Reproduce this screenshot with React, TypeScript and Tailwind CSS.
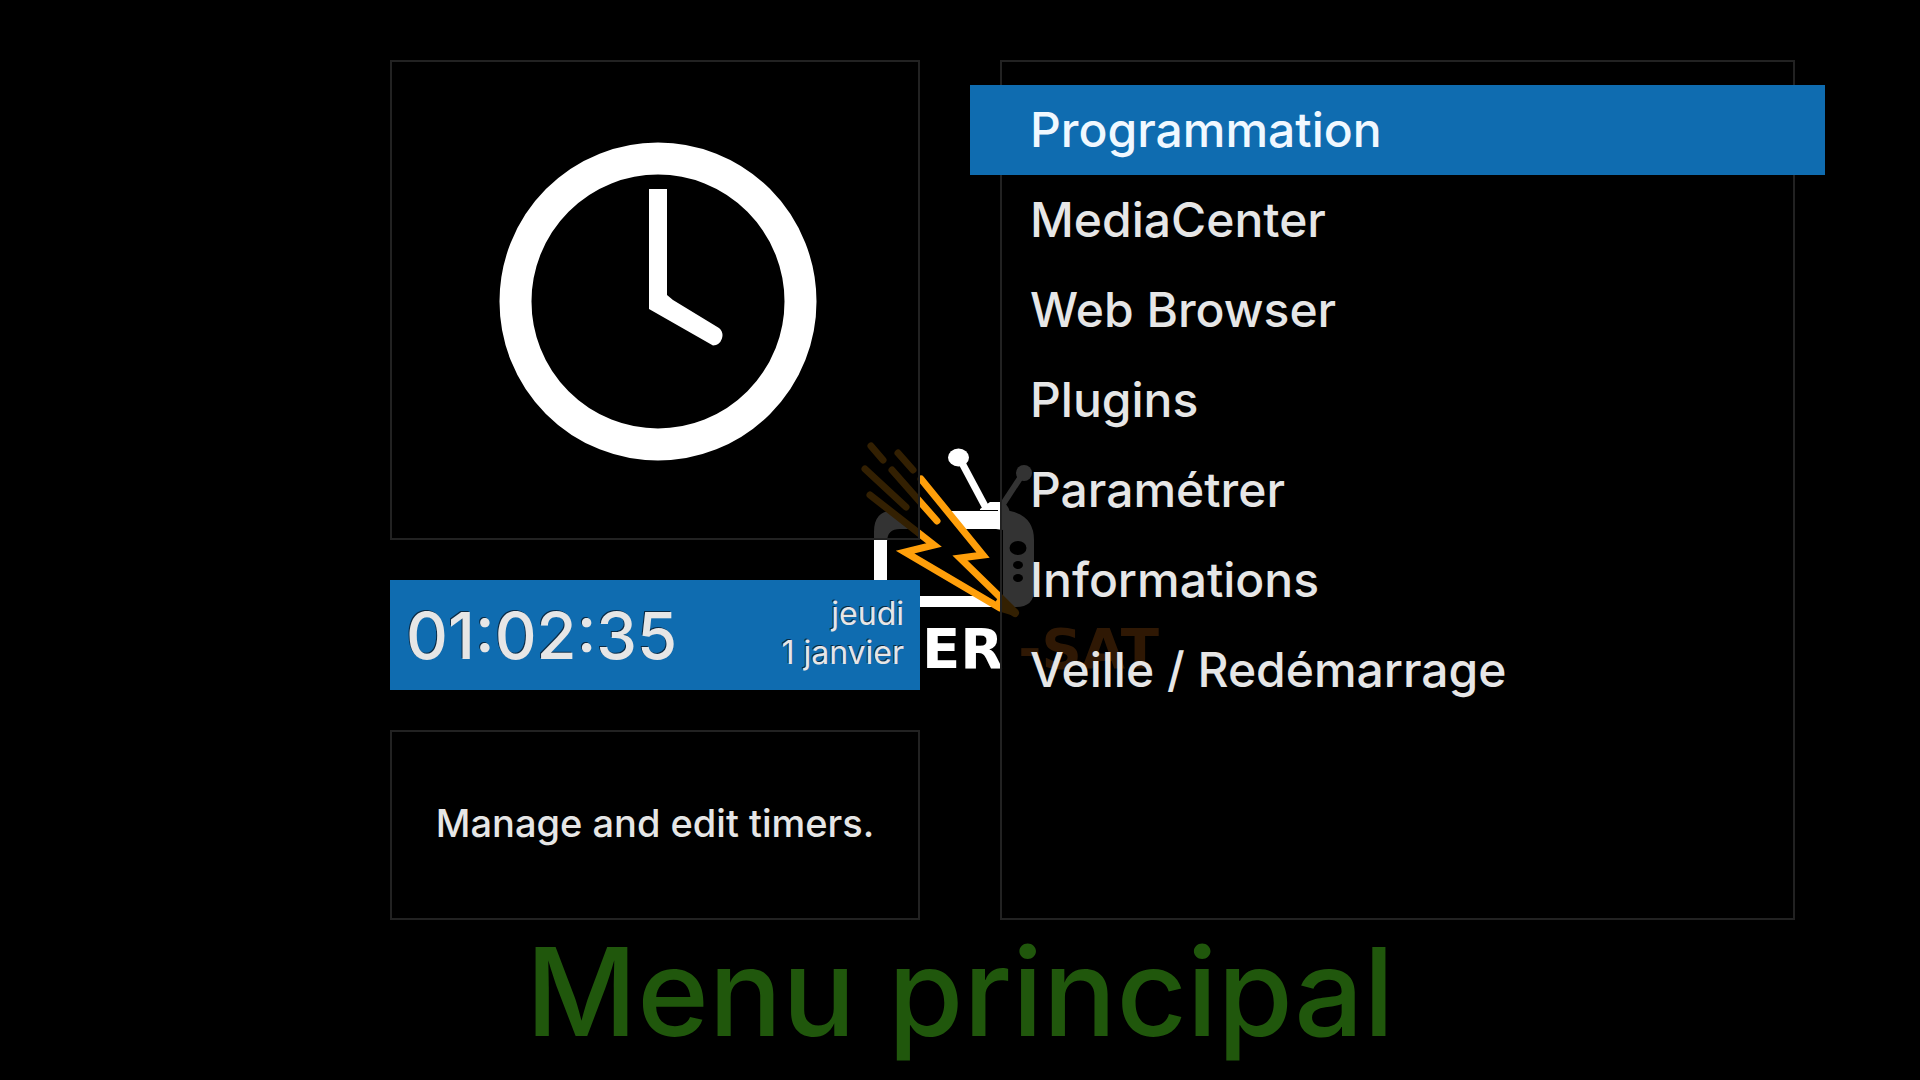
const MENU = [
  { label: "Programmation", selected: true },
  { label: "MediaCenter", selected: false },
  { label: "Web Browser", selected: false },
  { label: "Plugins", selected: false },
  { label: "Paramétrer", selected: false },
  { label: "Informations", selected: false },
  { label: "Veille / Redémarrage", selected: false },
]

// Boot logo, sits behind the translucent panels
function Logo() {
  return (
    <svg viewBox="760 410 400 260" className="w-[400px] h-[260px] shrink-0" role="img" aria-label="Power-Sat">
      {/* antennas */}
      <g stroke="#fff" fill="#fff">
        <ellipse cx="958.5" cy="457.5" rx="10.5" ry="9" stroke="none" />
        <path d="M962 463 986 508" strokeWidth="7" />
        <circle cx="1024" cy="473" r="8" stroke="none" />
        <path d="M1022 475 1003 504" strokeWidth="6" />
      </g>
      <path d="M980 509 990 502H1003Q1009 506 1010 513H998V510H980Z" fill="#fff" />

      {/* tv set */}
      <path
        fill="#fff"
        fillRule="evenodd"
        d="M892 511H1010Q1034 516 1034 540V590Q1034 607 1016 607H892Q874 607 874 590V532Q874 511 892 511ZM900 529Q887 529 887 542V596H1003V530L996 529Z"
      />
      <g fill="#000">
        <ellipse cx="1018" cy="548" rx="8.5" ry="7" />
        <ellipse cx="1018" cy="565" rx="5" ry="4" />
        <ellipse cx="1018" cy="578" rx="5" ry="4" />
      </g>

      {/* lightning bolt */}
      <path d="M921 479 985 555 958 558 1016 613 903 552 935 545 870 495Z" fill="#000" />
      <g stroke="#ff9f0a" strokeWidth="7" fill="none" strokeLinecap="round">
        <path d="M921 479 983 555 960 558 1001 598 1016 613 1000 608 905 552 934 545 870 495" />
        <path d="M871 446 883 460" />
        <path d="M898 453 913 470" />
        <path d="M892 470 937 521" />
        <path d="M865 469 906 507" />
        <path d="M1000 602 1015 613" strokeWidth="8" />
      </g>

      <g fontSize="56" className="font-['DejaVu_Sans',sans-serif] font-bold">
        <text x="922" y="668" fill="#fff">
          ER
        </text>
        <text x="1159" y="668" textAnchor="end" fill="#e87818">
          -SAT
        </text>
      </g>
    </svg>
  )
}

function ClockIcon() {
  return (
    <svg viewBox="392 62 526 476" className="w-full h-full" aria-hidden="true">
      <ellipse cx="658" cy="301.5" rx="142.5" ry="143" fill="none" stroke="#fff" strokeWidth="32" />
      <path
        d="M649 189H667V295L673 300 719 328A10 10 0 0 1 713 345.500L649 309Z"
        fill="#fff"
      />
    </svg>
  )
}

export default function App() {
  return (
    <div className="relative min-h-screen bg-black text-[#e6e6e6] font-[Inter,sans-serif] overflow-hidden">
      <div className="absolute inset-0 flex items-center justify-center">
        <Logo />
      </div>

      <main className="relative pt-[60px] pl-[390px] pr-[125px] grid grid-cols-[2fr_3fr] gap-20">
        <div className="flex flex-col gap-10 min-w-0">
          <div className="h-[480px] border-2 border-[#222] bg-black/80">
            <ClockIcon />
          </div>

          <div
            className="h-[110px] px-4 flex items-center justify-between bg-[#0f6cb0]"
            style={{ textShadow: "-1px -1px 0 #0a2a44" }}
          >
            <time className="text-[65px] leading-none font-medium">01:02:35</time>
            <div className="pb-1 text-right text-[32px] leading-[39px]">
              <div>jeudi</div>
              <div>1 janvier</div>
            </div>
          </div>

          <div className="flex-1 min-h-[190px] pb-1 border-2 border-[#222] bg-black/80 flex items-center justify-center text-center">
            <p className="text-[38px] leading-none font-medium">Manage and edit timers.</p>
          </div>
        </div>

        <nav className="pt-[23px] border-2 border-[#222] bg-black/80">
          <ul>
            {MENU.map((item) => (
              <li key={item.label} className={item.selected ? "-mx-8" : ""}>
                <button
                  type="button"
                  className={
                    item.selected
                      ? "block w-full h-[90px] px-[60px] text-left text-5xl font-medium bg-[#0f6cb0] text-[#f0f8ff]"
                      : "block w-full h-[90px] px-7 text-left text-5xl font-medium"
                  }
                >
                  {item.label}
                </button>
              </li>
            ))}
          </ul>
        </nav>
      </main>

      <h1 className="relative text-center text-[122px] leading-[144px] font-medium text-[#20570c]">Menu principal</h1>
    </div>
  )
}
